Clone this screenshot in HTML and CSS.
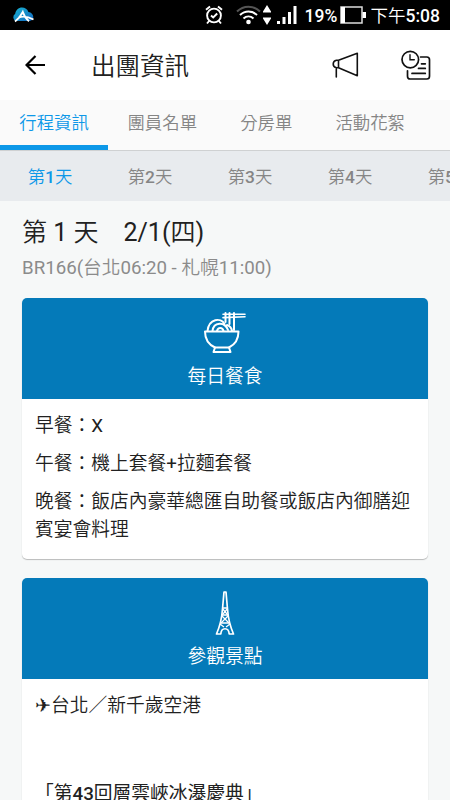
FILE: index.html
```
<!DOCTYPE html>
<html lang="zh-TW">
<head>
    <meta charset="UTF-8">
    <meta name="viewport" content="width=device-width, initial-scale=1">
    <title>出團資訊</title>
    <link rel="stylesheet" href="styles.css">
</head>
<body>
    <div class="status-bar">
        <svg class="app-logo" width="22" height="16" viewBox="0 0 22 16">
            <defs>
                <linearGradient id="cloud" x1="0" y1="0" x2="1" y2="1">
                    <stop offset="0" stop-color="#19b5d3"/>
                    <stop offset="1" stop-color="#1266bd"/>
                </linearGradient>
            </defs>
            <path fill="url(#cloud)" d="M4 14a4 4 0 0 1-.8-7.200C3.700 3 6.500.5 10 .5c3 0 5.500 1.500 6.400 4.500 3 .4 4.900 2.400 4.900 4.900 0 2.700-2 4.100-4.300 4.100z"/>
            <path fill="none" stroke="#fff" stroke-width="1.900" d="M3 14.500C6.500 12 8.500 9.500 10.800 5c1.200 3.500 2.700 6.500 6.200 9.300M6.500 10.500c5-1.700 10-.7 15 2"/>
        </svg>
        <div class="status-icons">
            <svg class="alarm" width="18" height="20" viewBox="0 0 18 20" fill="none" stroke="#fff" stroke-width="1.900">
                <circle cx="9" cy="10.500" r="6.900"/>
                <path d="M1 4.800L5 1.500M17 4.800l-4-3.300M4.500 15.500L2 18.500M13.500 15.500l2.500 3M6 10.500l2.200 2 4-4"/>
            </svg>
            <svg class="wifi" width="25" height="20" viewBox="0 0 25 20" fill="none" stroke="#fff" stroke-width="2">
                <path stroke="#555" d="M1 6.500c6.500-6.500 16.500-6.500 23 0"/>
                <path d="M4 10c5-4.800 12-4.800 17 0M7.500 13.500c3-2.700 7-2.700 10 0"/>
                <circle cx="12.500" cy="17" r="2.300" fill="#fff" stroke="none"/>
            </svg>
            <svg class="transfer" width="8" height="20" viewBox="0 0 8 20" fill="#fff">
                <path d="M4 0l4 6.500v1H0v-1zM0 12.500h8v1L4 20 0 13.500z"/>
            </svg>
            <svg class="signal" width="20" height="18" viewBox="0 0 20 18" fill="#fff">
                <path d="M0 15h3v3H0zM5.500 11h3v7h-3zM11 6h3v12h-3zM16.500 0h3v18h-3z"/>
            </svg>
            <span class="percent">19%</span>
            <svg class="battery" width="26" height="18" viewBox="0 0 26 18">
                <path fill="none" stroke="#ddd" stroke-width="1.500" d="M1 1h21v16H1z"/>
                <path fill="#fff" d="M1 1h4v16H1zM22.500 6H26v6h-3.500z"/>
            </svg>
            <span class="time">下午<b>5:08</b></span>
        </div>
    </div>

    <div class="toolbar">
        <svg class="back" width="20" height="20" viewBox="0 0 20 20" fill="none" stroke="#000" stroke-width="2.200">
            <path d="M20 10H2M10.500 1L1.500 10l9 9"/>
        </svg>
        <h1 class="page-title">出團資訊</h1>
        <svg class="megaphone" width="28" height="26" viewBox="0 0 28 26" fill="none" stroke="#111" stroke-width="1.600" stroke-linejoin="round" stroke-linecap="round">
            <path d="M6.500 8.200L25.300 1.300v22.400L6.500 15.800H4.500C.1 14.900.1 9.100 4.500 8.200zM6.500 8.200v7.600M4.300 17v8"/>
        </svg>
        <svg class="schedule" width="30" height="31" viewBox="0 0 30 31" fill="none" stroke="#111" stroke-width="1.700" stroke-linecap="round">
            <circle cx="9.300" cy="9.600" r="8.300"/>
            <path d="M9 4.800v5h4.300" stroke-width="1.400"/>
            <path d="M19.500 7h6.300q2.700 0 2.700 2.700v16.600q0 2.700-2.700 2.700H9.200q-2.700 0-2.700-2.700v-5.500"/>
            <path d="M20.500 13.800h3.800M17.500 18.400h6.800M11 23.400h13.300"/>
        </svg>
    </div>

    <div class="tabs">
        <div class="tab active">行程資訊</div>
        <div class="tab">團員名單</div>
        <div class="tab">分房單</div>
        <div class="tab">活動花絮</div>
    </div>

    <div class="days">
        <div class="day active">第<b>1</b>天</div>
        <div class="day">第<b>2</b>天</div>
        <div class="day">第<b>3</b>天</div>
        <div class="day">第<b>4</b>天</div>
        <div class="day">第<b>5</b>天</div>
    </div>

    <div class="content">
        <h2 class="day-title">第<span class="latin"> 1 </span>天　<span class="latin">2/1(</span>四<span class="latin">)</span></h2>
        <p class="flight"><span class="latin">BR166(</span>台北<span class="latin">06:20 - </span>札幌<span class="latin">11:00)</span></p>

        <div class="card">
            <div class="card-header">
                <svg width="44" height="44" viewBox="0 0 44 44" fill="none" stroke="#fff" stroke-width="2" stroke-linecap="round" stroke-linejoin="round">
                    <path d="M2 20.500h33.500c0 8-3.500 13-9.500 16H12C5.500 33.500 2 28.500 2 20.500z"/>
                    <path d="M12 36.500L10.500 41h17L26 36.500"/>
                    <path d="M4.500 20C6 7 18 6.500 21.500 13M9.500 20c1-9 12-10 15.500-1M14 20c1-4 5.500-4 6.500 0M24 14c3.500 1 4.500 3 5 6"/>
                    <path d="M22.500 2v9M26.500 2v11M31 2v17" stroke-width="2"/>
                    <path d="M20 3.200h22M20 6.600l22-.8" stroke-width="1.600"/>
                </svg>
                <div class="card-title">每日餐食</div>
            </div>
            <div class="card-body meals">
                <p>早餐：<span class="latin">X</span></p>
                <p>午餐：機上套餐<span class="latin">+</span>拉麵套餐</p>
                <p>晚餐：飯店內豪華總匯自助餐或飯店內御膳迎賓宴會料理</p>
            </div>
        </div>

        <div class="card">
            <div class="card-header">
                <svg width="20" height="44" viewBox="0 0 20 44" fill="none" stroke="#fff" stroke-width="1.700" stroke-linejoin="round">
                    <path d="M9 1h2l1.500 17c.7 10 2.500 17 6 25h-4.300c-.5-7-7.900-7-8.400 0H1.500c3.500-8 5.300-15 6-25z"/>
                    <path d="M7.700 17h4.600M7 24h6M5.500 32h9" stroke-width="1.500"/>
                    <path d="M7.800 18l5 6M12.200 18l-5 6M7 25l7 7M13 25l-7 7M5 33l4 3M15 33l-4 3" stroke-width="1.300"/>
                </svg>
                <div class="card-title">參觀景點</div>
            </div>
            <div class="card-body spots">
                <p><span class="plane">✈</span>台北／新千歲空港</p>
                <p class="event">「第<b>43</b>回層雲峽冰瀑慶典」</p>
            </div>
        </div>
    </div>
</body>
</html>
```

FILE: styles.css
```
* {
    box-sizing: border-box;
}

body {
    margin: 0;
    height: 800px;
    overflow: hidden;
    font-family: Roboto, "Noto Sans CJK TC", sans-serif;
    font-weight: 350;
    background-color: #f6f8f8;
    color: #212121;
}

h1, h2, p {
    margin: 0;
    font-weight: 350;
}

b {
    font-weight: 500;
}

.latin {
    font-weight: 400;
}

svg {
    display: block;
    flex-shrink: 0;
}

.status-bar {
    display: flex;
    justify-content: space-between;
    align-items: center;
    height: 30px;
    padding: 0 10px 0 12px;
    background-color: #000;
    color: #fff;
}

.status-icons {
    display: flex;
    align-items: center;
    line-height: 30px;
    white-space: nowrap;
}

.wifi {
    margin-left: 13px;
}

.transfer {
    margin-left: 2px;
}

.signal {
    margin-left: 6px;
}

.percent {
    width: 32px;
    margin-left: 8px;
    padding-top: 2px;
    font-size: 17.5px;
    font-weight: 500;
}

.battery {
    margin-left: 3px;
}

.time {
    margin-left: 5px;
    padding-top: 1px;
    font-size: 17.5px;
}

.toolbar {
    display: flex;
    align-items: center;
    height: 70px;
    padding: 0 19px 0 25px;
    background-color: #fff;
}

.page-title {
    flex: 1;
    margin-left: 46px;
    padding-top: 3px;
    font-size: 24.5px;
    line-height: 67px;
}

.schedule {
    margin-left: 41px;
}

.tabs {
    display: flex;
    height: 51px;
    background-color: #fafafa;
    border-bottom: 1px solid #cfd1d2;
}

.tab {
    flex-shrink: 0;
    padding: 0 19.3px;
    font-size: 17.4px;
    line-height: 47px;
    height: 50px;
    color: #858585;
}

.tab + .tab {
    padding-right: 23.8px;
}

.tab.active {
    color: #0d98e8;
    box-shadow: inset 0 -5px #0d98e8;
}

.days {
    display: flex;
    height: 50px;
    overflow: hidden;
    background-color: #e8ebee;
}

.day {
    flex: 0 0 100px;
    text-align: center;
    font-size: 17.4px;
    line-height: 53px;
    color: #858585;
}

.day.active {
    color: #0d98e8;
}

.content {
    padding: 13px 22px 0;
}

.day-title {
    font-size: 25px;
    line-height: 38px;
}

.flight {
    padding-top: 1px;
    margin-bottom: 15px;
    font-size: 18.7px;
    line-height: 30px;
    color: #8b8b8b;
}

.card {
    margin-bottom: 19px;
    background-color: #fff;
    border-radius: 5px;
    box-shadow: 0 1px 1px rgba(0, 0, 0, 0.25);
    overflow: hidden;
}

.card-header {
    display: flex;
    flex-direction: column;
    align-items: center;
    height: 101px;
    padding-top: 13px;
    background-color: #047ab9;
    color: #fff;
}

.card-title {
    font-size: 18.75px;
    line-height: 44px;
}

.card-body {
    padding: 13px 13px 0;
    font-size: 18.75px;
    line-height: 28px;
}

.card-body p {
    margin-bottom: 10px;
}

.meals {
    height: 160px;
}

.spots {
    height: 200px;
}

.plane {
    font-family: "DejaVu Sans", sans-serif;
}

.card-body .event {
    margin-top: 60px;
    font-weight: 400;
}
```
